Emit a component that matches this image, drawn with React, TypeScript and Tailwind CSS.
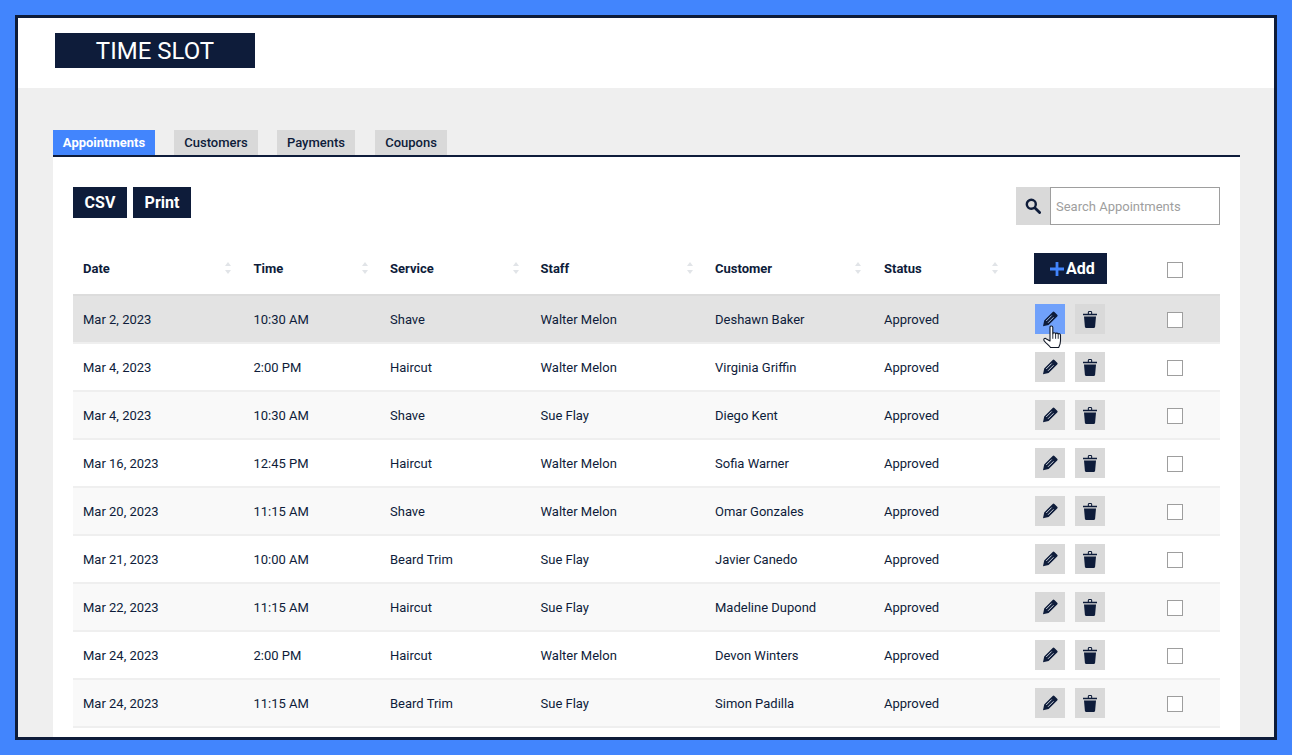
import React from "react";

const rows = [
  ["Mar 2, 2023", "10:30 AM", "Shave", "Walter Melon", "Deshawn Baker"],
  ["Mar 4, 2023", "2:00 PM", "Haircut", "Walter Melon", "Virginia Griffin"],
  ["Mar 4, 2023", "10:30 AM", "Shave", "Sue Flay", "Diego Kent"],
  ["Mar 16, 2023", "12:45 PM", "Haircut", "Walter Melon", "Sofia Warner"],
  ["Mar 20, 2023", "11:15 AM", "Shave", "Walter Melon", "Omar Gonzales"],
  ["Mar 21, 2023", "10:00 AM", "Beard Trim", "Sue Flay", "Javier Canedo"],
  ["Mar 22, 2023", "11:15 AM", "Haircut", "Sue Flay", "Madeline Dupond"],
  ["Mar 24, 2023", "2:00 PM", "Haircut", "Walter Melon", "Devon Winters"],
  ["Mar 24, 2023", "11:15 AM", "Beard Trim", "Sue Flay", "Simon Padilla"],
];

const Pencil = ({ stripe }: { stripe: string }) => (
  <svg width="16" height="16" viewBox="0 0 16 16" aria-hidden="true">
    <path fill="#0e1c3a" d="M10.700.9a1.200 1.200 0 0 1 1.700 0l2.800 2.800a1.200 1.200 0 0 1 0 1.700L6.600 14 1 15.200l1.200-5.800z" />
    <path stroke={stripe} strokeWidth="0.9" fill="none" d="M9.700 4.500 4.200 10 M11.500 6.300 6 11.800" />
  </svg>
);

const Trash = () => (
  <svg width="14" height="17" viewBox="0 0 14 17" aria-hidden="true">
    <path
      fill="#0e1c3a"
      d="M0 2.800h14v1.500H0z M4.800 2.800V1.500C4.800.6 5.400 0 6.300 0h1.400c.9 0 1.500.6 1.500 1.500v1.300H8.100V1.100H5.900v1.700z M1 5.400h12l-.9 10.400c0 .7-.5 1.200-1.200 1.200H3.100c-.7 0-1.200-.5-1.200-1.200z"
    />
  </svg>
);

const Search = () => (
  <svg width="16" height="16" viewBox="0 0 16 16" aria-hidden="true">
    <circle cx="6.300" cy="6.300" r="4.500" fill="none" stroke="#0e1c3a" strokeWidth="2.400" />
    <path d="M10 10l4.600 4.600" stroke="#0e1c3a" strokeWidth="2.800" strokeLinecap="round" />
  </svg>
);

const Sort = () => (
  <svg width="6" height="12" viewBox="0 0 6 12" aria-hidden="true">
    <path fill="#e1e4e8" d="M3 0l3 4H0z M3 12 0 8h6z" />
  </svg>
);

const HandCursor = () => (
  <svg width="20" height="25" viewBox="0 0 20 25" aria-hidden="true">
    <path
      fill="#fff"
      stroke="#111827"
      strokeWidth="1.100"
      strokeLinejoin="round"
      d="M7 2.200c0-1.600 2.800-1.600 2.800 0v6.600c.3-1.400 2.700-1.400 2.800.1.3-1.200 2.500-1.100 2.600.4.5-1 2.300-.8 2.300.8v5.600c0 3-1 5.200-1.800 6.800H7.500C6.400 20.600 1 16.600.8 15c-.2-1.500 1.400-2.200 2.600-1.100L7 16z"
    />
    <path stroke="#111827" strokeWidth="0.900" d="M9.800 8.800v5 M12.600 9v4.800 M15.200 9.600v4.200" />
  </svg>
);

const headers: [string, string, string][] = [
  ["Date", "w-[170.5px]", "left-[152px]"],
  ["Time", "w-[136.5px]", "left-[118px]"],
  ["Service", "w-[150.5px]", "left-[133px]"],
  ["Staff", "w-[174.5px]", "left-[156px]"],
  ["Customer", "w-[169px]", "left-[150px]"],
  ["Status", "w-[150px]", "left-[118px]"],
];
const widths = ["w-[170.5px]", "w-[136.5px]", "w-[150.5px]", "w-[174.5px]", "w-[169px]", "w-[150px]"];

export default function App() {
  return (
    <div className="h-[755px] overflow-hidden bg-[#4285fd] p-[15px] font-['Roboto',sans-serif] text-[13px] text-[#0e1c3a]">
      <div className="h-[725px] overflow-hidden border-[3px] border-[#0e1c3a] bg-[#efefef]">
        <header className="h-[70px] bg-white pl-[37px] pt-[15px]">
          <div className="flex h-[35px] w-[200px] items-center justify-center bg-[#0e1c3a] text-[24px] text-white">
            TIME SLOT
          </div>
        </header>
        <main className="pl-[35px] pr-[34px] pt-[42px]">
          <nav className="flex h-[27px] items-start gap-[19px] border-b-2 border-[#0e1c3a] text-[13px] font-medium">
            <div className="flex h-[25px] w-[102px] items-center justify-center bg-[#4285fd] font-bold text-white">Appointments</div>
            <div className="flex h-[25px] w-[84px] items-center justify-center bg-[#d9d9d9]">Customers</div>
            <div className="flex h-[25px] w-[78px] items-center justify-center bg-[#d9d9d9]">Payments</div>
            <div className="ml-[1px] flex h-[25px] w-[72px] items-center justify-center bg-[#d9d9d9]">Coupons</div>
          </nav>
          <section className="h-[600px] bg-white px-[20px] pt-[30px]">
            <div className="flex h-[31px] items-start justify-between">
              <div className="flex gap-[6px]">
                <button className="h-[31px] w-[54px] bg-[#0e1c3a] text-[16px] font-bold text-white">CSV</button>
                <button className="h-[31px] w-[58px] bg-[#0e1c3a] text-[16px] font-bold text-white">Print</button>
              </div>
              <div className="flex h-[38px]">
                <div className="flex w-[34px] items-center justify-center bg-[#d9d9d9]">
                  <Search />
                </div>
                <div className="flex w-[170px] items-center border border-[#9e9e9e] pl-[5px] pt-[2px] text-[13px] text-[#9e9e9e]">
                  Search Appointments
                </div>
              </div>
            </div>
            <div className="mt-[35px] flex h-[43px] items-center border-b-2 border-[#dcdcdc] pb-[10px] font-bold">
              {headers.map(([label, w, pos]) => (
                <div key={label} className={`relative pl-[10px] ${w}`}>
                  {label}
                  <span className={`absolute top-[3px] flex ${pos}`}>
                    <Sort />
                  </span>
                </div>
              ))}
              <div className="flex w-[196px] items-center pl-[10px]">
                <button className="flex h-[31px] w-[73px] items-center justify-center gap-[2px] bg-[#0e1c3a] pl-[4px] text-[16px] font-bold text-white">
                  <svg width="14" height="14" viewBox="0 0 14 14" aria-hidden="true">
                    <path fill="#4285fd" d="M5.600 0h2.800v5.600H14v2.800H8.400V14H5.600V8.400H0V5.600h5.600z" />
                  </svg>
                  Add
                </button>
                <span className="ml-[60px] mt-[2px] h-[16px] w-[16px] border border-[#9e9e9e] bg-white" />
              </div>
            </div>
            {rows.map((row, i) => (
              <div
                key={row[0] + row[1]}
                className={`flex h-[48px] items-center border-b-2 border-[#efefef] ${
                  i === 0 ? "bg-[#e3e3e3]" : i % 2 === 0 ? "bg-[#f9f9f9]" : "bg-white"
                }`}
              >
                {[...row, "Approved"].map((cell, c) => (
                  <div key={c} className={`pl-[10px] pt-[2px] ${widths[c]}`}>
                    {cell}
                  </div>
                ))}
                <div className="flex w-[196px] items-center pl-[11px]">
                  <div
                    className={`relative flex h-[30px] w-[30px] items-center justify-center ${
                      i === 0 ? "bg-[#70a1fb]" : "bg-[#d9d9d9]"
                    }`}
                  >
                    <Pencil stripe={i === 0 ? "#b4cdfb" : "#dfe3ea"} />
                    {i === 0 && (
                      <span className="absolute left-[8px] top-[21px] flex">
                        <HandCursor />
                      </span>
                    )}
                  </div>
                  <div className="ml-[10px] flex h-[30px] w-[30px] items-center justify-center bg-[#d9d9d9]">
                    <Trash />
                  </div>
                  <span className="ml-[62px] mt-[2px] h-[16px] w-[16px] border border-[#9e9e9e] bg-white" />
                </div>
              </div>
            ))}
          </section>
        </main>
      </div>
    </div>
  );
}
